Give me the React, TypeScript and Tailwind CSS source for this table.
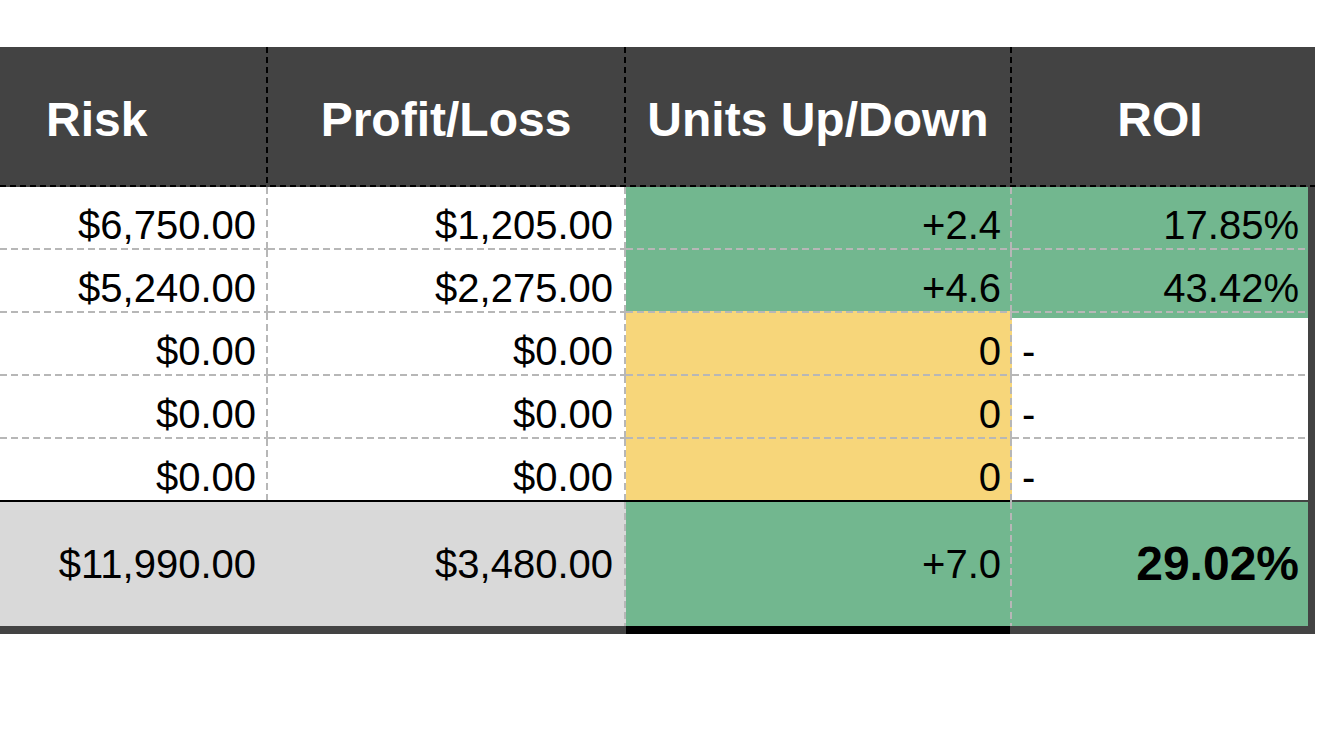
import React from 'react'

type Row = {
  risk: string
  pl: string
  units: string
  roi: string
  up: boolean
}

const rows: Row[] = [
  { risk: '$6,750.00', pl: '$1,205.00', units: '+2.4', roi: '17.85%', up: true },
  { risk: '$5,240.00', pl: '$2,275.00', units: '+4.6', roi: '43.42%', up: true },
  { risk: '$0.00', pl: '$0.00', units: '0', roi: '-', up: false },
  { risk: '$0.00', pl: '$0.00', units: '0', roi: '-', up: false },
  { risk: '$0.00', pl: '$0.00', units: '0', roi: '-', up: false },
]

// 4 columns with 2px line tracks between them
const cols = 'grid grid-cols-[266px_2px_356px_2px_384px_2px_1fr]'

const grayV = 'bg-[repeating-linear-gradient(180deg,#b7b7b7_0_7px,transparent_7px_11px)]'
const grayH = 'bg-[repeating-linear-gradient(90deg,#b7b7b7_0_7px,transparent_7px_11px)]'
const blackV = 'bg-[repeating-linear-gradient(180deg,#000_0_6px,transparent_6px_10px)]'
const blackH = 'bg-[repeating-linear-gradient(90deg,#000_0_6px,transparent_6px_10px)]'

const green = 'bg-[#72b78f]'
const yellow = 'bg-[#f7d67a]'

function HLine({ third, fourth }: { third: string; fourth: string }) {
  return (
    <div className={`${cols} h-[2px]`}>
      <div className={`bg-white ${grayH}`} />
      <div className="bg-[#b7b7b7]" />
      <div className={`bg-white ${grayH}`} />
      <div className="bg-[#b7b7b7]" />
      <div className={`${third} ${grayH}`} />
      <div className="bg-[#b7b7b7]" />
      <div className={`${fourth} ${grayH}`} />
    </div>
  )
}

export default function App() {
  return (
    <div className="min-h-screen bg-white pt-[47px] text-black font-['Liberation_Sans',Arial,sans-serif]">
      <div className="w-[1315px] bg-[#434343]">
        {/* Header */}
        <div className={`${cols} h-[138px] text-white font-bold text-[48px]`}>
          <div className="flex items-center pl-[46px] pt-[7px]">Risk</div>
          <div className={blackV} />
          <div className="flex items-center justify-center pt-[7px]">Profit/Loss</div>
          <div className={blackV} />
          <div className="flex items-center justify-center pt-[7px]">Units Up/Down</div>
          <div className={blackV} />
          <div className="flex items-center justify-center pt-[7px] pr-[7px]">ROI</div>
        </div>
        <div className={`h-[2px] ${blackH}`} />

        {/* Rows */}
        <div className="mr-[7px] bg-white text-[40px]">
          {rows.map((r, i) => {
            const next = rows[i + 1]
            const unitBg = r.up ? green : yellow
            return (
              <React.Fragment key={i}>
                <div className={`${cols} h-[61px]`}>
                  <div className="flex items-center justify-end pr-[10px] pt-[8px]">{r.risk}</div>
                  <div className={`bg-white ${grayV}`} />
                  <div className="flex items-center justify-end pr-[11px] pt-[8px]">{r.pl}</div>
                  <div className={`bg-white ${grayV}`} />
                  <div className={`flex items-center justify-end pr-[9px] pt-[8px] ${unitBg}`}>{r.units}</div>
                  <div className={`${unitBg} ${grayV}`} />
                  {r.up ? (
                    <div className={`flex items-center justify-end pr-[9px] pt-[8px] ${green}`}>{r.roi}</div>
                  ) : (
                    <div className="flex items-center pl-[10px] pt-[8px]">{r.roi}</div>
                  )}
                </div>
                {next && (
                  <HLine third={next.up ? green : yellow} fourth={r.up ? green : 'bg-white'} />
                )}
              </React.Fragment>
            )
          })}

          {/* solid rule above totals */}
          <div className={`${cols} h-[2px]`}>
            <div className="col-span-5 bg-black" />
            <div className="bg-[#b7b7b7]" />
            <div className="bg-[#434343]" />
          </div>

          {/* Totals */}
          <div className={`${cols} h-[124px]`}>
            <div className="col-span-2 flex items-center justify-end pr-[12px] bg-[#d9d9d9]">$11,990.00</div>
            <div className="flex items-center justify-end pr-[11px] bg-[#d9d9d9]">$3,480.00</div>
            <div className={`bg-[#d9d9d9] ${grayV}`} />
            <div className={`flex items-center justify-end pr-[9px] ${green}`}>+7.0</div>
            <div className={`${green} ${grayV}`} />
            <div className={`flex items-center justify-end pr-[9px] font-bold text-[48px] ${green}`}>29.02%</div>
          </div>
        </div>

        {/* bottom border */}
        <div className={`${cols} h-[8px]`}>
          <div className="col-span-4" />
          <div className="bg-black" />
        </div>
      </div>
    </div>
  )
}
